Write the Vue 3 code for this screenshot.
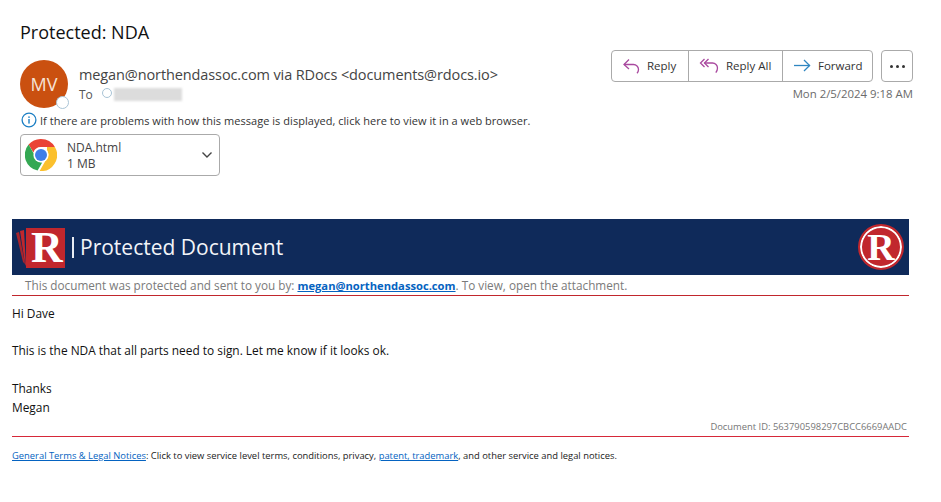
<template>
  <div class="page">
    <div class="head">
      <div class="head-left">
        <h1 class="subject">Protected: NDA</h1>
        <div class="sender">
          <div class="avatar">
            MV
            <span class="presence"></span>
          </div>
          <div class="sender-text">
            <div class="from">megan@northendassoc.com via RDocs &lt;documents@rdocs.io&gt;</div>
            <div class="to">
              <span>To</span>
              <span class="to-dot"></span>
              <span class="blurred"></span>
            </div>
          </div>
        </div>
      </div>
      <div class="head-right">
        <div class="actions">
          <div class="btn-group">
            <button class="btn">
              <svg width="20" height="18" viewBox="0 0 20 18" fill="none" stroke="#a9499f" stroke-width="1.3">
                <path d="M7 2.5 2 7.5 7 12" />
                <path d="M2 7.5h9.5a5 5 0 0 1 5 5c0 1.6-.5 2.8-1.5 3.8" />
              </svg>
              <span class="btn-label">Reply</span>
            </button>
            <button class="btn">
              <svg width="22" height="18" viewBox="0 0 22 18" fill="none" stroke="#a9499f" stroke-width="1.3">
                <path d="M5.5 2 1.5 6 5.5 10" />
                <path d="M9.5 2 5.5 6 9.5 10" />
                <path d="M5.5 6h8a5 5 0 0 1 5 5c0 1.8-.6 3.2-1.7 4.6" />
              </svg>
              <span class="btn-label">Reply All</span>
            </button>
            <button class="btn">
              <svg width="20" height="18" viewBox="0 0 20 18" fill="none" stroke="#2f86c1" stroke-width="1.3">
                <path d="M1 8.5h15.5" />
                <path d="M11 3l5.6 5.5L11 14" />
              </svg>
              <span class="btn-label">Forward</span>
            </button>
          </div>
          <button class="more">
            <span></span><span></span><span></span>
          </button>
        </div>
        <div class="date">Mon 2/5/2024 9:18 AM</div>
      </div>
    </div>

    <div class="info">
      <svg width="16" height="16" viewBox="0 0 16 16">
        <circle cx="8" cy="8" r="6.9" fill="none" stroke="#1c7fc4" stroke-width="1.3" />
        <rect x="7.3" y="7" width="1.4" height="4.6" fill="#1c7fc4" />
        <rect x="7.3" y="4.4" width="1.4" height="1.5" fill="#1c7fc4" />
      </svg>
      <span>If there are problems with how this message is displayed, click here to view it in a web browser.</span>
    </div>

    <div class="attachment">
      <svg class="chrome" width="32" height="32" viewBox="0 0 32 32">
        <path d="M16 0a16 16 0 0 1 13.86 8H16a8 8 0 0 0-7.6 5.5L3.6 5.6A16 16 0 0 1 16 0z" fill="#ea4335" />
        <path d="M3.6 5.6l6.9 12.2a7 7 0 0 0 6.7 5.6L12.6 31.6A16 16 0 0 1 3.6 5.6z" fill="#34a853" />
        <path d="M29.86 8A16 16 0 0 1 14.6 32l6.9-11.9A8 8 0 0 0 22 11V8z" fill="#fbc02d" />
        <circle cx="16" cy="16" r="7.6" fill="#fff" />
        <circle cx="16" cy="16" r="6" fill="#3f7ee8" />
      </svg>
      <div class="att-text">
        <div class="att-name">NDA.html</div>
        <div class="att-size">1 MB</div>
      </div>
      <svg class="chevron" width="12" height="8" viewBox="0 0 12 8" fill="none" stroke="#444" stroke-width="1.4">
        <path d="M1.5 1.5 6 6l4.5-4.5" />
      </svg>
    </div>

    <div class="mail">
      <div class="banner">
        <div class="banner-left">
          <div class="logo-square">
            <svg class="sheets" width="12" height="36" viewBox="0 0 12 36">
              <path d="M0 3 3 2 9 34 7 32z" fill="#a8242c" />
              <path d="M4 1 8 0 10 36 9 34z" fill="#c1272d" />
            </svg>
            <span class="logo-face">R</span>
          </div>
          <span class="banner-title">Protected Document</span>
        </div>
        <div class="seal"><span>R</span></div>
      </div>
      <div class="note">
        This document was protected and sent to you by:
        <a class="note-link">megan@northendassoc.com</a>. To view, open the attachment.
      </div>
      <div class="message">
        <p>Hi Dave</p>
        <p class="gap">This is the NDA that all parts need to sign. Let me know if it looks ok.</p>
        <p class="gap-lg">Thanks</p>
        <p>Megan</p>
      </div>
      <div class="doc-id">Document ID: 563790598297CBCC6669AADC</div>
      <div class="legal">
        <a>General Terms &amp; Legal Notices</a>: Click to view service level terms, conditions, privacy,
        <a>patent, trademark</a>, and other service and legal notices.
      </div>
    </div>
  </div>
</template>

<script setup>
</script>

<style>
html,
body {
  margin: 0;
  background: #fff;
}
</style>

<style scoped>
.page {
  width: 941px;
  height: 502px;
  overflow: hidden;
  font-family: "Open Sans", "Noto Sans", sans-serif;
  color: #111;
  box-sizing: border-box;
}

.head {
  display: flex;
  justify-content: space-between;
  padding: 0 28px 0 20px;
}

.subject {
  margin: 0;
  padding-top: 20px;
  font-size: 18px;
  line-height: 24px;
  font-weight: 400;
  color: #111;
}

.sender {
  display: flex;
  margin-top: 16px;
  gap: 11px;
}

.avatar {
  position: relative;
  width: 48px;
  height: 48px;
  border-radius: 50%;
  background: #ca5010;
  color: #f6e3d6;
  font-size: 18px;
  line-height: 48px;
  text-align: center;
}

.presence {
  position: absolute;
  right: -1px;
  bottom: -1px;
  width: 11px;
  height: 11px;
  border-radius: 50%;
  background: #fff;
  border: 1.5px solid #a9c4d6;
}

.sender-text {
  padding-top: 6px;
}

.from {
  font-size: 14.5px;
  line-height: 18px;
  color: #444;
  white-space: nowrap;
  letter-spacing: -0.11px;
}

.to {
  display: flex;
  align-items: center;
  margin-top: 1px;
  height: 18px;
  font-size: 12px;
  color: #555;
}

.to-dot {
  width: 8px;
  height: 8px;
  border-radius: 50%;
  border: 1px solid #a9c4d6;
  margin-left: 9px;
  margin-bottom: 2px;
}

.blurred {
  width: 68px;
  height: 13px;
  margin-left: 2px;
  background: #dcdcdc;
  filter: blur(1px);
}

.head-right {
  padding-top: 50px;
}

.actions {
  display: flex;
  gap: 8px;
}

.btn-group {
  display: flex;
  height: 32px;
  border: 1px solid #aaa;
  border-radius: 4px;
  box-sizing: border-box;
}

.btn {
  display: flex;
  align-items: center;
  gap: 5px;
  height: 30px;
  padding: 0 0 0 10px;
  border: none;
  border-right: 1px solid #aaa;
  background: transparent;
  font-family: inherit;
  font-size: 11.5px;
  white-space: nowrap;
  color: #333;
}

.btn-label {
  padding-bottom: 2px;
}

.btn:nth-child(1) {
  width: 77px;
}

.btn:nth-child(2) {
  width: 94px;
}

.btn:last-child {
  width: 89px;
  gap: 5px;
  border-right: none;
}

.more {
  display: flex;
  align-items: center;
  justify-content: center;
  gap: 3px;
  width: 32px;
  height: 32px;
  padding: 0;
  border: 1px solid #aaa;
  border-radius: 4px;
  background: #fff;
}

.more span {
  width: 3px;
  height: 3px;
  border-radius: 50%;
  background: #333;
}

.date {
  margin-top: 4px;
  font-size: 11.4px;
  line-height: 16px;
  text-align: right;
  color: #6b6b6b;
}

.info {
  display: flex;
  align-items: center;
  gap: 3px;
  margin: 3px 0 0 21px;
  height: 18px;
  font-size: 11px;
  letter-spacing: 0.04px;
  white-space: nowrap;
  color: #333;
}

.attachment {
  display: flex;
  align-items: center;
  width: 200px;
  height: 42px;
  margin: 5px 0 0 20px;
  border: 1px solid #aaa;
  border-radius: 4px;
  box-sizing: border-box;
  padding: 0 6px 0 4px;
}

.att-text {
  flex: 1;
  margin-left: 10px;
  padding-top: 2px;
  font-size: 12px;
  line-height: 16px;
  color: #444;
}

.mail {
  margin: 43px 32px 0 12px;
}

.banner {
  display: flex;
  align-items: center;
  justify-content: space-between;
  height: 56px;
  background: #0f2a5a;
  padding: 0 5px 0 4px;
}

.banner-left {
  display: flex;
  align-items: center;
}

.logo-square {
  position: relative;
  width: 49px;
  height: 40px;
  margin-top: 1px;
}

.sheets {
  position: absolute;
  left: 0;
  top: 2px;
}

.logo-face {
  position: absolute;
  left: 10px;
  top: 0;
  width: 39px;
  height: 40px;
  box-sizing: border-box;
  padding-left: 5px;
  background: #c1272d;
  color: #fff;
  font-family: "Liberation Serif", serif;
  font-weight: 700;
  font-size: 44px;
  line-height: 40px;
}

.banner-title {
  margin-left: 7px;
  padding-left: 6px;
  border-left: 2px solid #e8ecf3;
  font-size: 21px;
  line-height: 21px;
  color: #f2f4f8;
}

.seal {
  width: 46px;
  height: 46px;
  box-sizing: border-box;
  border-radius: 50%;
  background: #c1272d;
  border: 2px solid #c1272d;
  box-shadow: inset 0 0 0 2px #fff;
  text-align: center;
  color: #fff;
  font-family: "Liberation Serif", serif;
  font-weight: 700;
  font-size: 38px;
  line-height: 42px;
}

.note {
  height: 20px;
  padding-left: 13px;
  border-bottom: 1px solid #c1272d;
  font-size: 11.75px;
  line-height: 21px;
  color: #7a7a7a;
}

.note-link,
.legal a {
  color: #0563c1;
  text-decoration: underline;
}

.note-link {
  font-size: 11.2px;
  font-weight: 700;
}

.message {
  padding-top: 8px;
  font-size: 11.9px;
  line-height: 19px;
  color: #111;
}

.message p {
  margin: 0;
}

.message .gap {
  margin-top: 18px;
}

.message .gap-lg {
  margin-top: 19px;
}

.doc-id {
  height: 19px;
  padding-right: 2px;
  border-bottom: 1px solid #d62839;
  font-size: 9.4px;
  line-height: 20px;
  text-align: right;
  color: #777;
}

.legal {
  padding-top: 12px;
  font-size: 9.4px;
  line-height: 14px;
  color: #222;
}
</style>
